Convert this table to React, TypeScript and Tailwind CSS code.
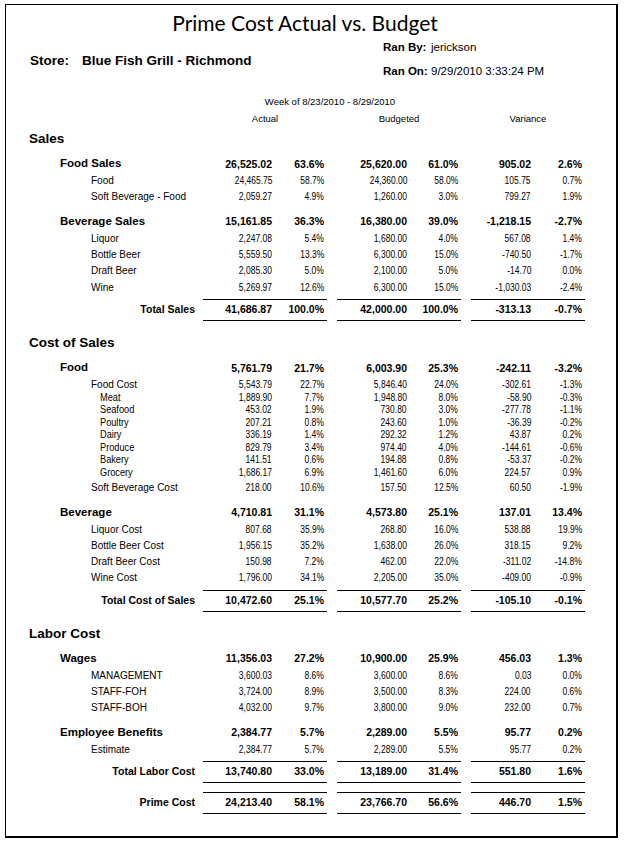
import React from "react";

type Vals = [string, string, string, string, string, string];

type Item =
  | { k: "l1"; label: string; v: Vals }
  | { k: "l2"; label: string; v: Vals }
  | { k: "l3"; rows: { label: string; v: Vals }[] };

type Group = Item[];

function N({ s, bold }: { s: string; bold: boolean }) {
  if (bold) return <>{s}</>;
  return <span className="inline-block origin-right scale-x-[0.85]">{s}</span>;
}

function Nums({ v, bold }: { v: Vals; bold: boolean }) {
  return (
    <>
      <div className="flex w-[124px] shrink-0 pr-[3px]">
        <div className="w-[69px] text-right">
          <N s={v[0]} bold={bold} />
        </div>
        <div className="flex-1 text-right">
          <N s={v[1]} bold={bold} />
        </div>
      </div>
      <div className="ml-[10px] flex w-[124px] shrink-0 pr-[3px]">
        <div className="w-[70px] text-right">
          <N s={v[2]} bold={bold} />
        </div>
        <div className="flex-1 text-right">
          <N s={v[3]} bold={bold} />
        </div>
      </div>
      <div className="ml-[10px] flex w-[114px] shrink-0 pr-[3px]">
        <div className="w-[60px] text-right">
          <N s={v[4]} bold={bold} />
        </div>
        <div className="flex-1 text-right">
          <N s={v[5]} bold={bold} />
        </div>
      </div>
    </>
  );
}

function L1Row({ label, v }: { label: string; v: Vals }) {
  return (
    <div className="mt-[7px] flex h-[18px] items-center">
      <div className="w-[197px] shrink-0 pl-[54px] text-[11.5px] font-bold">{label}</div>
      <div className="flex text-[10.5px] font-bold">
        <Nums v={v} bold />
      </div>
    </div>
  );
}

function L2Row({ label, v }: { label: string; v: Vals }) {
  return (
    <div className="flex h-[16.3px] items-center">
      <div className="w-[197px] shrink-0 pl-[85px] text-[10px]">{label}</div>
      <div className="flex text-[10px]">
        <Nums v={v} bold={false} />
      </div>
    </div>
  );
}

function L3Row({ label, v }: { label: string; v: Vals }) {
  return (
    <div className="flex h-[12.5px] items-center">
      <div className="w-[197px] shrink-0 pl-[94px] text-[10px]">
        <span className="inline-block origin-left scale-x-[0.92]">{label}</span>
      </div>
      <div className="flex text-[10px]">
        <Nums v={v} bold={false} />
      </div>
    </div>
  );
}

function Line({ top }: { top: "a" | "b" | "c" }) {
  const cls = top === "a" ? "mt-[3.5px] flex" : top === "b" ? "flex" : "mt-[9px] flex";
  return (
    <div className={cls}>
      <div className="w-[197px] shrink-0" />
      <div className="h-px w-[124px] shrink-0 bg-black" />
      <div className="ml-[10px] h-px w-[124px] shrink-0 bg-black" />
      <div className="ml-[10px] h-px w-[114px] shrink-0 bg-black" />
    </div>
  );
}

function TotalRow({ label, v }: { label: string; v: Vals }) {
  return (
    <div className="flex h-[20px] items-center pb-[2px]">
      <div className="w-[197px] shrink-0 pr-[8px] text-right text-[10.5px] font-bold">{label}</div>
      <div className="flex text-[10.5px] font-bold">
        <Nums v={v} bold />
      </div>
    </div>
  );
}

function Section({
  title,
  groups,
  total,
  first,
}: {
  title: string;
  groups: Group[];
  total: { label: string; v: Vals };
  first?: boolean;
}) {
  return (
    <div className={first ? "" : "mt-[12.5px]"}>
      <div className="flex h-[18px] items-center pl-[23px] text-[13.5px] font-bold">{title}</div>
      {groups.map((g, gi) => (
        <div key={gi}>
          {g.map((it, i) => {
            if (it.k === "l1") return <L1Row key={i} label={it.label} v={it.v} />;
            if (it.k === "l2") return <L2Row key={i} label={it.label} v={it.v} />;
            return (
              <div key={i} className="mb-[1px] mt-[-1.5px]">
                {it.rows.map((r, j) => (
                  <L3Row key={j} label={r.label} v={r.v} />
                ))}
              </div>
            );
          })}
        </div>
      ))}
      <Line top="a" />
      <TotalRow label={total.label} v={total.v} />
      <Line top="b" />
    </div>
  );
}

const sales: Group[] = [
  [
    { k: "l1", label: "Food Sales", v: ["26,525.02", "63.6%", "25,620.00", "61.0%", "905.02", "2.6%"] },
    { k: "l2", label: "Food", v: ["24,465.75", "58.7%", "24,360.00", "58.0%", "105.75", "0.7%"] },
    { k: "l2", label: "Soft Beverage - Food", v: ["2,059.27", "4.9%", "1,260.00", "3.0%", "799.27", "1.9%"] },
  ],
  [
    { k: "l1", label: "Beverage Sales", v: ["15,161.85", "36.3%", "16,380.00", "39.0%", "-1,218.15", "-2.7%"] },
    { k: "l2", label: "Liquor", v: ["2,247.08", "5.4%", "1,680.00", "4.0%", "567.08", "1.4%"] },
    { k: "l2", label: "Bottle Beer", v: ["5,559.50", "13.3%", "6,300.00", "15.0%", "-740.50", "-1.7%"] },
    { k: "l2", label: "Draft Beer", v: ["2,085.30", "5.0%", "2,100.00", "5.0%", "-14.70", "0.0%"] },
    { k: "l2", label: "Wine", v: ["5,269.97", "12.6%", "6,300.00", "15.0%", "-1,030.03", "-2.4%"] },
  ],
];

const cost: Group[] = [
  [
    { k: "l1", label: "Food", v: ["5,761.79", "21.7%", "6,003.90", "25.3%", "-242.11", "-3.2%"] },
    { k: "l2", label: "Food Cost", v: ["5,543.79", "22.7%", "5,846.40", "24.0%", "-302.61", "-1.3%"] },
    {
      k: "l3",
      rows: [
        { label: "Meat", v: ["1,889.90", "7.7%", "1,948.80", "8.0%", "-58.90", "-0.3%"] },
        { label: "Seafood", v: ["453.02", "1.9%", "730.80", "3.0%", "-277.78", "-1.1%"] },
        { label: "Poultry", v: ["207.21", "0.8%", "243.60", "1.0%", "-36.39", "-0.2%"] },
        { label: "Dairy", v: ["336.19", "1.4%", "292.32", "1.2%", "43.87", "0.2%"] },
        { label: "Produce", v: ["829.79", "3.4%", "974.40", "4.0%", "-144.61", "-0.6%"] },
        { label: "Bakery", v: ["141.51", "0.6%", "194.88", "0.8%", "-53.37", "-0.2%"] },
        { label: "Grocery", v: ["1,686.17", "6.9%", "1,461.60", "6.0%", "224.57", "0.9%"] },
      ],
    },
    { k: "l2", label: "Soft Beverage Cost", v: ["218.00", "10.6%", "157.50", "12.5%", "60.50", "-1.9%"] },
  ],
  [
    { k: "l1", label: "Beverage", v: ["4,710.81", "31.1%", "4,573.80", "25.1%", "137.01", "13.4%"] },
    { k: "l2", label: "Liquor Cost", v: ["807.68", "35.9%", "268.80", "16.0%", "538.88", "19.9%"] },
    { k: "l2", label: "Bottle Beer Cost", v: ["1,956.15", "35.2%", "1,638.00", "26.0%", "318.15", "9.2%"] },
    { k: "l2", label: "Draft Beer Cost", v: ["150.98", "7.2%", "462.00", "22.0%", "-311.02", "-14.8%"] },
    { k: "l2", label: "Wine Cost", v: ["1,796.00", "34.1%", "2,205.00", "35.0%", "-409.00", "-0.9%"] },
  ],
];

const labor: Group[] = [
  [
    { k: "l1", label: "Wages", v: ["11,356.03", "27.2%", "10,900.00", "25.9%", "456.03", "1.3%"] },
    { k: "l2", label: "MANAGEMENT", v: ["3,600.03", "8.6%", "3,600.00", "8.6%", "0.03", "0.0%"] },
    { k: "l2", label: "STAFF-FOH", v: ["3,724.00", "8.9%", "3,500.00", "8.3%", "224.00", "0.6%"] },
    { k: "l2", label: "STAFF-BOH", v: ["4,032.00", "9.7%", "3,800.00", "9.0%", "232.00", "0.7%"] },
  ],
  [
    { k: "l1", label: "Employee Benefits", v: ["2,384.77", "5.7%", "2,289.00", "5.5%", "95.77", "0.2%"] },
    { k: "l2", label: "Estimate", v: ["2,384.77", "5.7%", "2,289.00", "5.5%", "95.77", "0.2%"] },
  ],
];

export default function App() {
  return (
    <div className="h-[843px] w-[625px] overflow-hidden bg-white font-['Liberation_Sans',Arial,sans-serif] leading-none text-black">
      <div className="ml-[5px] mt-[4px] h-[834px] w-[613px] border-b-2 border-l border-r-2 border-t border-black">
        {/* Title */}
        <div className="flex h-[34px] items-center justify-center pr-[12px] font-['Lato',sans-serif] text-[21px]">
          Prime Cost Actual vs. Budget
        </div>
        {/* Info */}
        <div className="flex h-[41px]">
          <div className="flex w-[377px] shrink-0 items-center pl-[24px] pt-[3px] text-[13.5px] font-bold">
            <span className="w-[52px]">Store:</span>
            <span>Blue Fish Grill - Richmond</span>
          </div>
          <div className="flex flex-col text-[11.5px]">
            <div className="mt-[1px] flex h-[16px] items-center">
              <span className="w-[48px] font-bold">Ran By:</span>
              <span>jerickson</span>
            </div>
            <div className="mt-[8px] flex h-[16px] items-center">
              <span className="w-[48px] font-bold">Ran On:</span>
              <span>9/29/2010 3:33:24 PM</span>
            </div>
          </div>
        </div>
        {/* Week */}
        <div className="ml-[197px] mt-[15px] flex h-[14px] w-[254px] items-center justify-center text-[9.5px]">
          Week of 8/23/2010 - 8/29/2010
        </div>
        <div className="mt-[2.5px] flex h-[14px] items-center text-[9.5px]">
          <div className="w-[197px] shrink-0" />
          <div className="w-[124px] shrink-0 text-center">Actual</div>
          <div className="ml-[10px] w-[124px] shrink-0 text-center">Budgeted</div>
          <div className="ml-[10px] w-[114px] shrink-0 text-center">Variance</div>
        </div>
        <div className="mt-[4.5px]">
          <Section
            first
            title="Sales"
            groups={sales}
            total={{ label: "Total Sales", v: ["41,686.87", "100.0%", "42,000.00", "100.0%", "-313.13", "-0.7%"] }}
          />
          <Section
            title="Cost of Sales"
            groups={cost}
            total={{ label: "Total Cost of Sales", v: ["10,472.60", "25.1%", "10,577.70", "25.2%", "-105.10", "-0.1%"] }}
          />
          <Section
            title="Labor Cost"
            groups={labor}
            total={{ label: "Total Labor Cost", v: ["13,740.80", "33.0%", "13,189.00", "31.4%", "551.80", "1.6%"] }}
          />
          <Line top="c" />
          <TotalRow label="Prime Cost" v={["24,213.40", "58.1%", "23,766.70", "56.6%", "446.70", "1.5%"]} />
          <Line top="b" />
        </div>
      </div>
    </div>
  );
}
